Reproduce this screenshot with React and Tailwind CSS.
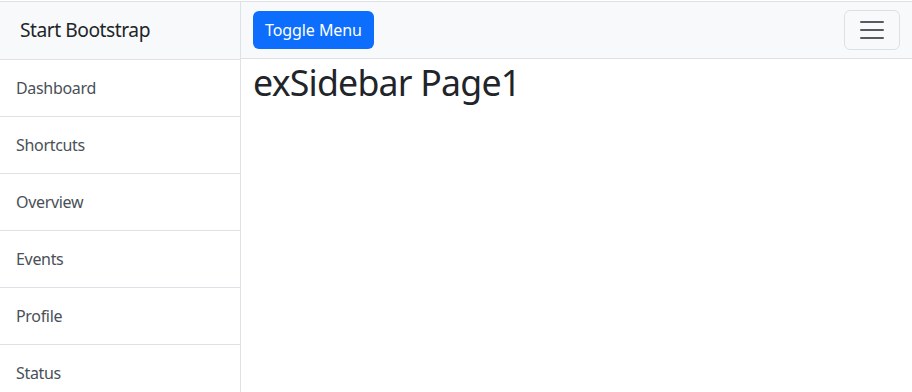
import React from 'react';

const items = ['Dashboard', 'Shortcuts', 'Overview', 'Events', 'Profile', 'Status'];

const App = () => {
  return (
    <div
      className="h-[392px] overflow-hidden bg-white pt-px text-[#212529]"
      style={{ fontFamily: '"Noto Sans", "Noto Sans CJK KR", sans-serif' }}
    >
      <div className="flex h-full border-t border-[#dee2e6]">
        {/* 사이드바 */}
        <div className="w-[241px] shrink-0 border-r border-[#dee2e6] bg-white">
          <div className="h-[58px] border-b border-[#dee2e6] bg-[#f8f9fa] px-5 py-[14px] text-[19.2px] leading-[1.5] tracking-[-0.024em]">
            Start Bootstrap
          </div>
          <div className="flex flex-col">
            {items.map((item) => (
              <a
                key={item}
                href="#"
                className="block h-[57px] border-b border-[#dee2e6] p-4 text-base leading-6 tracking-[-0.02em] text-[#495057]"
              >
                {item}
              </a>
            ))}
          </div>
        </div>

        {/* 본문 */}
        <div className="flex-1">
          <nav className="flex h-[57px] items-center justify-between border-b border-[#dee2e6] bg-[#f8f9fa] px-3">
            <button className="h-[38px] rounded-md bg-[#0d6efd] px-3 text-base leading-6 tracking-[-0.005em] text-white">
              Toggle Menu
            </button>
            <button className="flex h-10 w-14 items-center justify-center rounded-md border border-black/10">
              <svg width="30" height="30" viewBox="0 0 30 30">
                <path
                  d="M4 7h22M4 15h22M4 23h22"
                  stroke="rgba(33,37,41,0.75)"
                  strokeWidth="2"
                  strokeLinecap="round"
                />
              </svg>
            </button>
          </nav>
          <div className="px-3">
            <h1 className="mt-[2px] text-[35.7px] font-normal leading-[1.2] tracking-[-0.022em]">exSidebar Page1</h1>
          </div>
        </div>
      </div>
    </div>
  );
};

export default App;
